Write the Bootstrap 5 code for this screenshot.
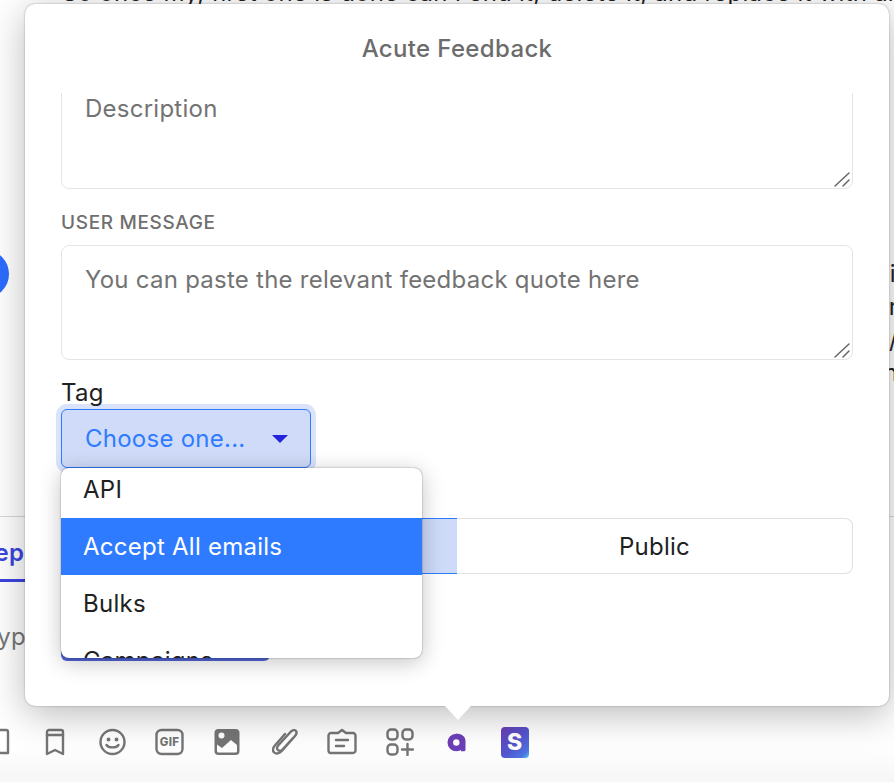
<!DOCTYPE html>
<html lang="en">
<head>
<meta charset="utf-8">
<title>Acute Feedback</title>
<link rel="stylesheet" href="https://cdn.jsdelivr.net/npm/bootstrap@5.3.0/dist/css/bootstrap.min.css">
<style>
html,body{height:782px;overflow:hidden;background:#fff}
body{font-family:Inter,"Liberation Sans",sans-serif;color:#212121;letter-spacing:.25px}
.app-page{height:782px;width:894px;position:relative;overflow:hidden;background:linear-gradient(to bottom,#fff 0,#fff 745px,#f6f6f6 782px)}
.app-topline{font-size:24px;line-height:30px;margin:-22px 0 0 62px;white-space:nowrap;color:#1f1f1f;height:30px}
.app-thread{height:211px}
.app-blue-dot{width:48px;height:48px;border-radius:50%;background:#2c6cff;margin:242px 0 0 -39px;flex:none}
.app-side-text{width:100%;margin:249px -4px 0 0;text-align:right;font-size:24px;line-height:33px;color:#222}
.app-side-first{margin-right:-6px}
.app-tabs{margin-top:297px;height:65px;border-top:1px solid #d8d8d8;color:#3b45e0;font-weight:600;font-size:24px;line-height:72px;white-space:nowrap}
.app-tab-word{display:block;margin-left:-21px;width:60px;height:65px;border-bottom:3px solid #3b45e0}
.app-type{font-size:24px;color:#777;margin:41px 0 0 -17px;line-height:30px}
.app-tools{position:absolute;left:-31.5px;bottom:22px;height:36px}
.app-tool{width:57.5px;height:36px;flex:none}
.app-tool svg{display:block}
.ic{fill:none;stroke:#757575;stroke-width:2.4;stroke-linecap:round;stroke-linejoin:round}
.gif-word{font:800 11.5px Inter,sans-serif;fill:#757575;stroke:none;letter-spacing:.2px}
.s-logo{width:28px;height:31px;border-radius:4px;background:linear-gradient(135deg,#6b3db5 0%,#5257cf 55%,#4d74e0 85%,#4cc6f5 100%);color:#fff;font-weight:800;font-size:23px;line-height:31px;text-align:center}
.fb-window{position:absolute;left:25px;top:4px;width:864px;height:702px;background:#fff;border-radius:10px;box-shadow:0 0 2px rgba(0,0,0,.35),0 8px 38px rgba(0,0,0,.28)}
.fb-window::after{content:"";position:absolute;left:420px;bottom:-14px;width:26px;height:14px;background:#fff;clip-path:polygon(0 0,100% 0,50% 100%)}
.fb-head{height:89px;font-size:24px;font-weight:500;letter-spacing:.35px;color:#6c6c6c;padding-top:28px;line-height:34px;text-align:center}
.fb-body{height:613px;padding:0 36px;overflow:hidden;position:relative;border-radius:0 0 10px 10px}
.fb-area-wrap{position:relative}
.fb-area.form-control{height:115px;font-size:24px;line-height:34px;padding:17px 23px;border:1px solid #e4e4e4;border-radius:8px;color:#212121;box-shadow:none;resize:none;letter-spacing:.25px}
.fb-area::placeholder{color:#737373;opacity:1}
.fb-grip{position:absolute;right:3px;bottom:2px;display:block}
.fb-grip path{stroke:#666;stroke-width:1.5;stroke-linecap:round;fill:none}
.fb-first{margin-top:-19px}
.fb-label{display:block;font-size:19px;font-weight:500;letter-spacing:.65px;color:#6f6f6f;line-height:26px;margin:21px 0 9px}
.fb-tag{display:block;font-size:24px;line-height:30px;color:#212121;margin:18px 0 1px}
.fb-select.btn{width:250px;height:59px;font-size:24px;line-height:30px;padding:0 23px;color:#2f7bff;background:#cfdbf8;border:1px solid #2f7bff;border-radius:6px;box-shadow:0 0 0 5px #dbe3fb;display:flex;align-items:center;justify-content:space-between;letter-spacing:.25px}
.fb-caret{width:0;height:0;border-left:8px solid transparent;border-right:8px solid transparent;border-top:8px solid #2323dc;margin-right:-1px}
.fb-seg{height:56px;margin-top:50px}
.fb-seg .btn{flex:1 1 50%;font-size:24px;line-height:30px;padding:1px 0 0;color:#212121;border-radius:8px;border:1px solid #e0e0e0;background:#fff;letter-spacing:.25px}
.fb-seg .fb-seg-on{background:#cddaf8;border-color:#2f7bff;border-radius:8px 0 0 8px;flex:0 0 397px}
.fb-seg .fb-seg-off{border-left:0;border-radius:0 8px 8px 0;margin-left:0}
.fb-send{display:block;width:209px;height:60px;margin:27px 0 0;background:#4f63d4;border-radius:6px;border:0}
.fb-menu.dropdown-menu{display:block;left:36px;top:375px;width:361px;height:190px;padding:0;overflow:hidden;border:0;border-radius:8px;box-shadow:0 0 1.5px rgba(0,0,0,.55),0 4px 22px rgba(0,0,0,.24);margin:0}
.fb-menu .dropdown-item{height:57px;line-height:57px;padding:0 22px;font-size:24px;color:#212121;letter-spacing:.25px}
.fb-menu .dropdown-item.active{background:#2f7bff;color:#fff}
.fb-menu-first{margin-top:-7px}
</style>
</head>
<body>
<div class="app-page">
  <div class="app-topline">So once my, first one is done can I end it, delete it, and replace it with an</div>
  <div class="app-thread d-flex">
    <div class="app-blue-dot"></div>
    <div class="app-side-text">
      <div class="app-side-first">it</div><div>r</div><div>/</div><div>n</div>
    </div>
  </div>
  <div class="app-tabs"><span class="app-tab-word">Rep</span></div>
  <div class="app-type">Type</div>

  <div class="app-tools d-flex align-items-center">
    <div class="app-tool d-flex justify-content-center align-items-center">
      <svg width="26" height="28" viewBox="0 0 26 28"><path class="ic" d="M2 24V4a2 2 0 0 1 2-2h18a2 2 0 0 1 2 2v21h-7c-2 0-3-1-4-2"/></svg>
    </div>
    <div class="app-tool d-flex justify-content-center align-items-center">
      <svg width="20" height="28" viewBox="0 0 20 28"><path class="ic" d="M2 26V4a2 2 0 0 1 2-2h12a2 2 0 0 1 2 2v22l-8-4z"/><path class="ic" d="M2 7h16"/></svg>
    </div>
    <div class="app-tool d-flex justify-content-center align-items-center">
      <svg width="27" height="28" viewBox="0 0 27 28"><circle class="ic" cx="13.5" cy="14" r="12"/><circle cx="9.5" cy="11.5" r="1.9" fill="#757575"/><circle cx="17.5" cy="11.5" r="1.9" fill="#757575"/><path class="ic" d="M7.5 17c2 3.2 10 3.2 12 0"/></svg>
    </div>
    <div class="app-tool d-flex justify-content-center align-items-center">
      <svg width="29" height="28" viewBox="0 0 29 28"><rect class="ic" x="1.5" y="2" width="26" height="24" rx="5"/><text class="gif-word" x="14.5" y="18.2" text-anchor="middle">GIF</text></svg>
    </div>
    <div class="app-tool d-flex justify-content-center align-items-center">
      <svg width="26" height="28" viewBox="0 0 26 28"><rect x="0.5" y="1" width="25" height="26" rx="4" fill="#757575"/><circle cx="7.5" cy="7.5" r="3" fill="#fff"/><path d="M3 23v-6.5l5 3.500 9-8 6 5V23a1.500 1.500 0 0 1-1.500 1.500h-17A1.500 1.500 0 0 1 3 23z" fill="#fff"/></svg>
    </div>
    <div class="app-tool d-flex justify-content-center align-items-center">
      <svg width="26" height="30" viewBox="0 0 26 30"><path class="ic" d="M21 11 10.500 22.500c-1.500 1.700-3.700 1.600-4.700.5s-.9-3 .6-4.700L18.500 5c2-2.200 4.300-2.300 5.300-1.200s.9 3.300-1 5.500L10 23.800c-2.700 3-6 3.400-7.800 1.700S.6 21 3.300 18L13 7"/></svg>
    </div>
    <div class="app-tool d-flex justify-content-center align-items-center">
      <svg width="30" height="28" viewBox="0 0 30 28"><path class="ic" d="M4 5h7l4-3 4 3h7a2.500 2.500 0 0 1 2.500 2.500v15A2.500 2.500 0 0 1 26 25H4a2.500 2.500 0 0 1-2.500-2.500v-15A2.500 2.500 0 0 1 4 5z"/><path class="ic" d="M9 12h12M9 18h8"/></svg>
    </div>
    <div class="app-tool d-flex justify-content-center align-items-center">
      <svg width="28" height="28" viewBox="0 0 28 28"><rect class="ic" x="1.500" y="1.500" width="10" height="10" rx="3.500"/><rect class="ic" x="16.500" y="1.500" width="10" height="10" rx="3.500"/><rect class="ic" x="1.500" y="16.500" width="10" height="10" rx="3.500"/><path class="ic" d="M21.500 16v11M16 21.500h11"/></svg>
    </div>
    <div class="app-tool d-flex justify-content-center align-items-center">
      <svg width="20" height="20" viewBox="0 0 20 20"><circle cx="9.300" cy="10.500" r="6" fill="none" stroke="#6d3fb8" stroke-width="5.600"/><path d="M9 1.700c6 0 9.500 2.500 9.500 7.500v8.600a1.500 1.500 0 0 1-1.500 1.500h-3V9z" fill="#6d3fb8"/></svg>
    </div>
    <div class="app-tool d-flex justify-content-center align-items-center">
      <div class="s-logo">S</div>
    </div>
  </div>

  <div class="fb-window">
    <div class="fb-head">Acute Feedback</div>
    <div class="fb-body">
      <div class="fb-area-wrap">
        <textarea class="form-control fb-area fb-first" placeholder="Description"></textarea>
        <svg class="fb-grip" width="16" height="16" viewBox="0 0 16 16"><path d="M1 15 15 2M9 15l6-6"/></svg>
      </div>
      <label class="fb-label text-uppercase">User message</label>
      <div class="fb-area-wrap">
        <textarea class="form-control fb-area" placeholder="You can paste the relevant feedback quote here"></textarea>
        <svg class="fb-grip" width="16" height="16" viewBox="0 0 16 16"><path d="M1 15 15 2M9 15l6-6"/></svg>
      </div>
      <label class="fb-tag">Tag</label>
      <button type="button" class="btn fb-select"><span>Choose one...</span><span class="fb-caret"></span></button>
      <div class="btn-group d-flex fb-seg">
        <button type="button" class="btn fb-seg-on">Private</button>
        <button type="button" class="btn fb-seg-off">Public</button>
      </div>
      <button type="button" class="fb-send"></button>
      <ul class="dropdown-menu fb-menu">
        <li class="fb-menu-first"><a class="dropdown-item" href="#">API</a></li>
        <li><a class="dropdown-item active" href="#">Accept All emails</a></li>
        <li><a class="dropdown-item" href="#">Bulks</a></li>
        <li><a class="dropdown-item" href="#">Campaigns</a></li>
      </ul>
    </div>
  </div>
</div>
<script src="https://cdn.jsdelivr.net/npm/bootstrap@5.3.0/dist/js/bootstrap.bundle.min.js"></script>
</body>
</html>
